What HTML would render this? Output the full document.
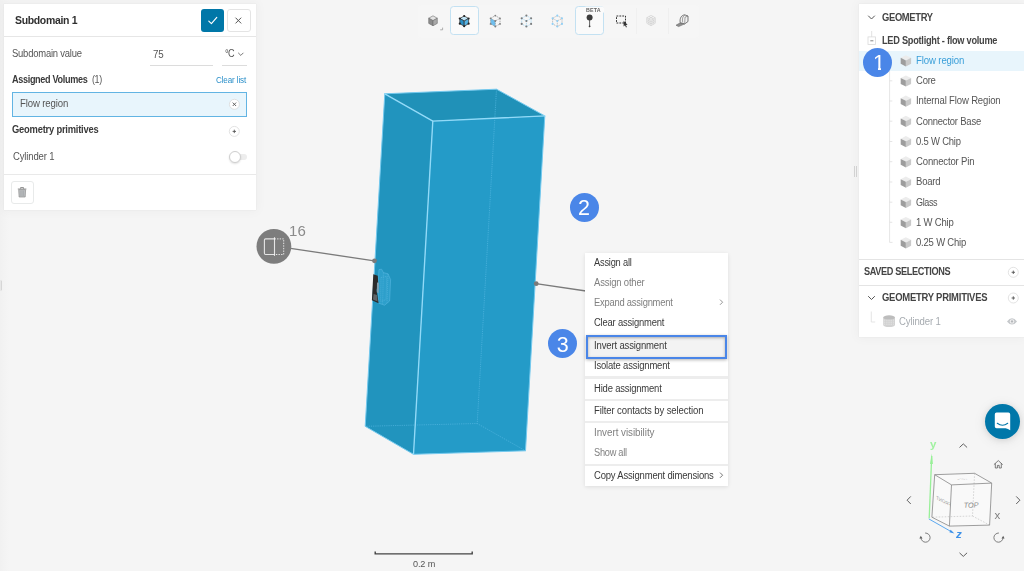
<!DOCTYPE html>
<html lang="en">
<head>
<meta charset="utf-8">
<title>Subdomain 1 - Invert assignment</title>
<style>
html,body{margin:0;padding:0;}
body{width:1024px;height:571px;overflow:hidden;background:#f5f5f5;position:relative;font-family:"Liberation Sans",sans-serif;}
.abs{position:absolute;}
.t{position:absolute;white-space:nowrap;line-height:1;}
.panel{position:absolute;background:#fff;box-shadow:0 0 10px 2px rgba(0,0,0,0.03), 0 0 1px rgba(0,0,0,0.10);}
.circ{position:absolute;border-radius:50%;}
.badge{position:absolute;width:29px;height:29px;border-radius:50%;background:#4a86e8;}
.sep{position:absolute;left:585px;width:143.2px;height:2.4px;background:#ededed;}
.ic{position:absolute;overflow:visible;}
</style>
</head>
<body>
<!-- viewport scene -->
<svg class="abs" style="left:0;top:0" width="1024" height="571" viewBox="0 0 1024 571">
  <!-- box -->
  <polygon points="384.8,93.8 496.5,89.2 544.8,115.9 432.8,121.1" fill="#2091b8"/>
  <polygon points="384.8,93.8 432.8,121.1 413.5,454.3 365.2,426.3" fill="#2194be"/>
  <polygon points="432.8,121.1 544.8,115.9 525.5,450.8 413.5,454.3" fill="#249bc8"/>
  <g fill="none" stroke="#55b8e2" stroke-width="0.8" stroke-dasharray="1.2 1" opacity="0.85">
    <polyline points="496.5,89.2 477.2,423.5 365.2,426.3"/>
    <line x1="477.2" y1="423.5" x2="525.5" y2="450.8"/>
  </g>
  <g fill="none" stroke="#74c9ee" stroke-width="1" stroke-linejoin="round" stroke-linecap="round">
    <polyline points="384.8,93.8 496.5,89.2 544.8,115.9 525.5,450.8 413.5,454.3 365.2,426.3 384.8,93.8"/>
  </g>
  <g fill="none" stroke="#92daf8" stroke-width="1.35" stroke-linejoin="round" stroke-linecap="round">
    <polyline points="384.8,93.8 432.8,121.1 544.8,115.9"/>
    <line x1="432.8" y1="121.1" x2="413.5" y2="454.3"/>
  </g>
  <!-- leader lines -->
  <line x1="290.5" y1="248.4" x2="374.3" y2="260.8" stroke="#7a7a7a" stroke-width="1.3"/>
  <circle cx="374.5" cy="260.8" r="2.4" fill="#7a7a7a"/>
  <line x1="536" y1="283.7" x2="586" y2="291" stroke="#7a7a7a" stroke-width="1.3"/>
  <circle cx="536.2" cy="283.7" r="2.4" fill="#7a7a7a"/>
  <!-- small lamp -->
  <g>
    <path d="M378.6 276 L379 269.6 L381.6 269.2 L383.4 272.6 L388 273.8 L390.6 279.6 L389.6 301 L384.6 305.2 L378.2 303 Z" fill="#2d9fcb" stroke="#56b6e0" stroke-width="0.7" stroke-opacity="0.85"/>
    <path d="M381 277.5 L386.8 276.4 L386 299.6 L380.6 301.6 Z M383.4 272.6 L382.6 303.8 M388 273.8 L387 302.6" fill="none" stroke="#63bde4" stroke-width="0.5" stroke-opacity="0.8" stroke-dasharray="1.2 0.8"/>
    <polygon points="373.3,274.2 377.8,275.8 378.2,283 376.6,290 378.6,303.2 371.9,300.2" fill="#2b2b2b"/>
    <polygon points="377,282.4 379,282.8 378.6,293 376.8,292.4" fill="#7f9fb0"/>
    <polygon points="373.6,294 377,295 377.6,301.6 373,299.6" fill="#5e6468"/>
  </g>
  <!-- node icon -->
  <circle cx="273.9" cy="246.4" r="17.4" fill="#7d7d7d"/>
  <g fill="none" stroke="#fff" stroke-opacity="0.8">
    <path d="M274.5 238.9 H265.6 Q264.4 238.9 264.4 240.1 V253.3 Q264.4 254.5 265.6 254.5 H274.5" stroke-width="1.1"/>
    <path d="M274.5 238.9 H283.7 V254.5 H274.5" stroke-width="1" stroke-dasharray="1.4 1.2"/>
    <line x1="274.5" y1="237.2" x2="274.5" y2="255.9" stroke-width="1.1"/>
  </g>
  <!-- scale bar -->
  <path d="M375.2 551.4 V553.9 H472.2 V551.4" fill="none" stroke="#444" stroke-width="1.4"/>
</svg>

<!-- left edge band -->
<div class="abs" style="left:0;top:0;width:9px;height:571px;background:linear-gradient(90deg,#f1f1f1,#f5f5f5)"></div>
<div class="abs" style="left:0;top:279.5px;width:2.2px;height:11px;background:#e7e7e7"></div>
<div class="abs" style="left:1px;top:280.5px;width:0.8px;height:9px;background:#d6d6d6"></div>

<!-- LEFT PANEL -->
<div class="panel" style="left:4px;top:4px;width:251.5px;height:206px;"></div>
<div class="abs" style="left:4px;top:36px;width:251.5px;height:1px;background:#e6e6e6"></div>
<div class="abs" style="left:201px;top:9px;width:23px;height:23px;border-radius:3px;background:#0077a8"></div>
<svg class="ic" style="left:201px;top:9px" width="23" height="23" viewBox="0 0 23 23"><path d="M7.8 12.2 L10.4 14.6 L15.8 8.4" fill="none" stroke="#fff" stroke-width="1.15" stroke-linecap="round" stroke-linejoin="round"/></svg>
<div class="abs" style="left:227px;top:8.8px;width:21.5px;height:21.5px;border-radius:3px;background:#fff;border:1px solid #e4e4e4"></div>
<svg class="ic" style="left:227px;top:8.8px" width="23" height="23" viewBox="0 0 23 23"><path d="M8.5 8.7 L14.2 14.4 M14.2 8.7 L8.5 14.4" fill="none" stroke="#555" stroke-width="1"/></svg>
<div class="abs" style="left:150px;top:65px;width:63px;height:1px;background:#dcdcdc"></div>
<div class="abs" style="left:222px;top:65px;width:24.5px;height:1px;background:#dcdcdc"></div>
<svg class="ic" style="left:237px;top:50px" width="8" height="8" viewBox="0 0 8 8"><path d="M1.2 2.8 L3.8 5.4 L6.4 2.8" fill="none" stroke="#666" stroke-width="0.9"/></svg>
<div class="abs" style="left:12px;top:92px;width:233px;height:23px;background:#e8f5fc;border:1px solid #62b4e3;border-left-width:1.5px;border-bottom-width:1.5px"></div>
<svg class="ic" style="left:228px;top:98px" width="13" height="13" viewBox="0 0 13 13"><circle cx="6.4" cy="6.3" r="5" fill="#fff" stroke="#d9d9d9" stroke-width="0.8"/><path d="M4.7 4.6 L8.1 8 M8.1 4.6 L4.7 8" stroke="#555" stroke-width="0.9" fill="none"/></svg>
<svg class="ic" style="left:227.5px;top:125px" width="13" height="13" viewBox="0 0 13 13"><circle cx="6.3" cy="6.4" r="5" fill="#fff" stroke="#dcdcdc" stroke-width="0.8"/><path d="M4.6 6.4 H8 M6.3 4.7 V8.1" stroke="#555" stroke-width="0.9" fill="none"/></svg>
<!-- toggle -->
<div class="abs" style="left:234px;top:153.5px;width:12.5px;height:6.5px;border-radius:3.5px;background:#ededed"></div>
<div class="abs" style="left:229.3px;top:151.4px;width:10px;height:10px;border-radius:50%;background:#fff;border:0.8px solid #cfcfcf;box-shadow:0 1px 2px rgba(0,0,0,0.12)"></div>
<div class="abs" style="left:4px;top:174px;width:251.5px;height:1px;background:#e9e9e9"></div>
<div class="abs" style="left:11.3px;top:181.2px;width:20.4px;height:20.4px;border-radius:3px;background:#fff;border:1px solid #e8eaea"></div>
<svg class="ic" style="left:11.3px;top:181.2px" width="22" height="22" viewBox="0 0 22 22"><path d="M6.8 8 H15.4 M9.6 7.8 V6.5 H12.5 V7.8" fill="none" stroke="#8a8a8a" stroke-width="0.9"/><path d="M7.7 8.6 H14.6 L14.2 16 H8.1 Z" fill="#bcbfc1" stroke="#8e8e8e" stroke-width="0.7"/><path d="M9.8 9.6 V15 M11.15 9.6 V15 M12.5 9.6 V15" stroke="#9a9da0" stroke-width="0.5"/></svg>

<!-- TOOLBAR -->
<div class="abs" style="left:418px;top:5px;width:281px;height:33px;border-radius:3px;background:#f6f6f6;box-shadow:0 0 1px rgba(0,0,0,0.02)"></div>
<div class="abs" style="left:450.3px;top:6.2px;width:27px;height:27px;border-radius:3.5px;background:#fafafa;border:0.8px solid #c3e1f2"></div>
<div class="abs" style="left:575.4px;top:6.2px;width:27px;height:27px;border-radius:3.5px;background:#fafafa;border:0.8px solid #c3e1f2"></div>
<div class="abs" style="left:636px;top:8px;width:1px;height:26px;background:#f0f0f0"></div>
<div class="abs" style="left:667.5px;top:8px;width:1px;height:26px;background:#efefef"></div>
<svg class="abs" style="left:410px;top:0" width="300" height="42" viewBox="410 0 300 42">
  <!-- icon1 gray cube -->
  <g transform="translate(433,20.8) scale(0.86)">
    <polygon points="0,-5.8 5,-3 0,-0.2 -5,-3" fill="#e4e4e4" stroke="#6f6f6f" stroke-width="0.7"/>
    <polygon points="-5,-3 0,-0.2 0,5.8 -5,3" fill="#8c8c8c" stroke="#6f6f6f" stroke-width="0.7"/>
    <polygon points="5,-3 0,-0.2 0,5.8 5,3" fill="#a9a9a9" stroke="#6f6f6f" stroke-width="0.7"/>
  </g>
  <path d="M442.6 27.6 V29.8 H440.2" fill="none" stroke="#9a9a9a" stroke-width="0.8"/>
  <!-- icon2 blue cube w/ vertices -->
  <g transform="translate(464.2,21) scale(0.9)">
    <polygon points="0,-5.6 4.9,-2.8 0,0 -4.9,-2.8" fill="#bfe4f6" stroke="#333" stroke-width="0.8"/>
    <polygon points="-4.9,-2.8 0,0 0,5.8 -4.9,3" fill="#2b8fc6" stroke="#333" stroke-width="0.8"/>
    <polygon points="4.9,-2.8 0,0 0,5.8 4.9,3" fill="#56b3e4" stroke="#333" stroke-width="0.8"/>
    <g fill="#222"><circle cx="0" cy="-5.6" r="1.2"/><circle cx="4.9" cy="-2.8" r="1.2"/><circle cx="-4.9" cy="-2.8" r="1.2"/><circle cx="0" cy="5.8" r="1.2"/><circle cx="-4.9" cy="3" r="1.2"/><circle cx="4.9" cy="3" r="1.2"/></g>
  </g>
  <!-- icon3 -->
  <g transform="translate(495.3,21) scale(0.96)">
    <polygon points="-4.9,-2.8 0,0 0,5.8 -4.9,3" fill="#6fbfee"/>
    <g fill="none" stroke="#8c8c8c" stroke-width="0.7" stroke-dasharray="1.4 0.7"><polygon points="0,-5.6 4.9,-2.8 4.9,3 0,5.8 -4.9,3 -4.9,-2.8"/><path d="M-4.9 -2.8 L0 0 L4.9 -2.8 M0 0 V5.8"/></g>
    <g fill="#808080"><circle cx="0" cy="-5.6" r="0.95"/><circle cx="4.9" cy="-2.8" r="0.95"/><circle cx="-4.9" cy="-2.8" r="0.95"/><circle cx="0" cy="5.8" r="0.95"/><circle cx="-4.9" cy="3" r="0.95"/><circle cx="4.9" cy="3" r="0.95"/><circle cx="0" cy="0" r="0.95"/></g>
  </g>
  <!-- icon4 -->
  <g transform="translate(526.4,21) scale(0.96)">
    <g fill="none" stroke="#8fcdf0" stroke-width="0.75" stroke-dasharray="1.3 0.9"><polygon points="0,-5.6 4.9,-2.8 4.9,3 0,5.8 -4.9,3 -4.9,-2.8"/><path d="M-4.9 -2.8 L0 0 L4.9 -2.8 M0 0 V5.8"/></g>
    <g fill="#7c7c7c"><circle cx="0" cy="-5.6" r="1.1"/><circle cx="4.9" cy="-2.8" r="1.1"/><circle cx="-4.9" cy="-2.8" r="1.1"/><circle cx="0" cy="5.8" r="1.1"/><circle cx="-4.9" cy="3" r="1.1"/><circle cx="4.9" cy="3" r="1.1"/><circle cx="0" cy="0" r="1.1"/></g>
  </g>
  <!-- icon5 -->
  <g transform="translate(557.3,21) scale(0.96)">
    <g fill="none" stroke="#9c9c9c" stroke-width="0.65" stroke-dasharray="1.4 0.8"><polygon points="0,-5.6 4.9,-2.8 4.9,3 0,5.8 -4.9,3 -4.9,-2.8"/><path d="M-4.9 -2.8 L0 0 L4.9 -2.8 M0 0 V5.8"/></g>
    <g fill="#8fd0f8"><circle cx="0" cy="-5.6" r="1.05"/><circle cx="4.9" cy="-2.8" r="1.05"/><circle cx="-4.9" cy="-2.8" r="1.05"/><circle cx="0" cy="5.8" r="1.05"/><circle cx="-4.9" cy="3" r="1.05"/><circle cx="4.9" cy="3" r="1.05"/><circle cx="0" cy="0" r="1.05"/></g>
  </g>
  <!-- pin icon -->
  <circle cx="589.6" cy="17.4" r="3" fill="#3c3c3c"/>
  <line x1="589.6" y1="20" x2="589.6" y2="26.4" stroke="#3c3c3c" stroke-width="0.8"/>
  <path d="M588.5 26.3 L589.6 25.2 L590.7 26.3 L589.6 27.5 Z" fill="#3c3c3c"/>
  <rect x="583.4" y="6.6" width="20.8" height="6.8" rx="3" fill="#fbfbfb"/>
  <!-- select rect -->
  <rect x="616.5" y="16" width="9" height="7" fill="none" stroke="#333" stroke-width="1" stroke-dasharray="1.8 1.1"/>
  <path d="M623.6 20.8 L623.6 26.6 L625 25.3 L626 27.4 L626.9 27 L625.9 24.9 L627.6 24.8 Z" fill="#333"/>
  <!-- faded mesh cube -->
  <g transform="translate(651,20.5) scale(0.92)" fill="none" stroke="#c6c6c6" stroke-width="0.6">
    <polygon points="0,-5.6 4.6,-3 4.6,3 0,5.6 -4.6,3 -4.6,-3"/>
    <path d="M-4.6 -3 L0 -0.4 L4.6 -3 M0 -0.4 V5.6 M-2.3 -1.7 V4.3 M2.3 -1.7 V4.3 M-4.6 -1 L0 1.6 L4.6 -1 M-4.6 1 L0 3.6 L4.6 1 M-2.3 -4.3 L2.3 -1.7 M2.3 -4.3 L-2.3 -1.7"/>
  </g>
  <!-- tape measure -->
  <g stroke-linejoin="round">
    <path d="M680.3 22.8 L676 25.2 L678.6 26.6 L684.8 23.8 Z" fill="#8f8f8f" stroke="#6a6a6a" stroke-width="0.6"/>
    <path d="M680.2 22.7 C679.5 18.2 681.4 14.9 684.9 14.9 L688 16 L688 21.5 L684.7 23.9 Z" fill="#f1f1f1" stroke="#5c5c5c" stroke-width="0.8"/>
    <path d="M684.9 14.9 C682.6 15.9 682 19.3 682.7 22.3 M688 16 L685 17.2 L684.7 23.9" fill="none" stroke="#6c6c6c" stroke-width="0.6"/>
  </g>
</svg>

<!-- RIGHT PANEL -->
<div class="abs" style="left:853.6px;top:165.5px;width:1px;height:11px;background:#d4d4d4"></div>
<div class="abs" style="left:855.7px;top:165.5px;width:1px;height:11px;background:#d4d4d4"></div>
<div class="panel" style="left:859px;top:4px;width:165px;height:332.7px;"></div>
<div class="abs" style="left:859px;top:51px;width:165px;height:20px;background:#e8f5fc"></div>
<div class="abs" style="left:859px;top:259px;width:165px;height:1px;background:#e4e4e4"></div>
<div class="abs" style="left:859px;top:285px;width:165px;height:1px;background:#e4e4e4"></div>
<svg class="abs" style="left:859px;top:4px" width="165" height="333" viewBox="859 4 165 333">
  <path d="M868.2 15.7 L871.5 19 L874.8 15.7" fill="none" stroke="#555" stroke-width="1"/>
  <path d="M868.2 296.2 L871.5 299.5 L874.8 296.2" fill="none" stroke="#555" stroke-width="1"/>
  <line x1="871.7" y1="31" x2="871.7" y2="37" stroke="#d9d9d9" stroke-width="0.8"/>
  <rect x="868" y="36.9" width="7.6" height="7.6" fill="#fff" stroke="#dadada" stroke-width="0.8"/>
  <line x1="870.3" y1="40.8" x2="873.4" y2="40.8" stroke="#777" stroke-width="0.9"/>
  <g stroke="#dedede" stroke-width="0.8" fill="none">
    <path d="M889.6 71 V242.4 H892.5"/>
    <path d="M889.6 80.8 H892.3 M889.6 101 H892.3 M889.6 121.2 H892.3 M889.6 141.5 H892.3 M889.6 161.7 H892.3 M889.6 182 H892.3 M889.6 202.2 H892.3 M889.6 222.3 H892.3"/>
    <path d="M871.3 311.5 V322 H875.2"/>
  </g>
  <defs>
    <g id="cube">
      <polygon points="0,-5.6 5.2,-3 0,-0.4 -5.2,-3" fill="#ececec"/>
      <polygon points="-5.2,-3 0,-0.4 0,5.6 -5.2,2.9" fill="#9d9d9d"/>
      <polygon points="5.2,-3 0,-0.4 0,5.6 5.2,2.9" fill="#c9c9c9"/>
    </g>
  </defs>
  <use href="#cube" x="905.9" y="60.8"/>
  <use href="#cube" x="905.9" y="81"/>
  <use href="#cube" x="905.9" y="101.2"/>
  <use href="#cube" x="905.9" y="121.4"/>
  <use href="#cube" x="905.9" y="141.7"/>
  <use href="#cube" x="905.9" y="161.9"/>
  <use href="#cube" x="905.9" y="182.2"/>
  <use href="#cube" x="905.9" y="202.4"/>
  <use href="#cube" x="905.9" y="222.6"/>
  <use href="#cube" x="905.9" y="242.8"/>
  <!-- plus circles -->
  <g fill="#fff" stroke="#dcdcdc" stroke-width="0.8"><circle cx="1013.3" cy="272.3" r="5"/><circle cx="1013.3" cy="298" r="5"/></g>
  <path d="M1011.6 272.3 H1015 M1013.3 270.6 V274 M1011.6 298 H1015 M1013.3 296.3 V299.7" stroke="#555" stroke-width="0.9" fill="none"/>
  <!-- cylinder icon -->
  <g>
    <path d="M883.2 317.4 V325 A5.9 2.1 0 0 0 895 325 V317.4 Z" fill="#d2d2d2"/>
    <ellipse cx="889.1" cy="317.4" rx="5.9" ry="2.1" fill="#bdbdbd"/>
    <path d="M884 320.2 H894.4 M884 322.2 H894.4 M884 324.2 H894.4" stroke="#f4f4f4" stroke-width="0.6" stroke-dasharray="0.9 0.9"/>
  </g>
  <!-- eye -->
  <path d="M1007 321.4 Q1012 315 1017 321.4 Q1012 327.8 1007 321.4 Z" fill="#c4c7ca"/>
  <circle cx="1012" cy="321.4" r="2.2" fill="#f4f4f4"/><circle cx="1012" cy="321.4" r="1.2" fill="#b4b7ba"/>
</svg>
<div class="badge" style="left:863.3px;top:47.7px"></div>

<!-- badges 2,3 -->
<div class="badge" style="left:569.9px;top:192.5px"></div>
<div class="badge" style="left:548.1px;top:329.2px"></div>

<!-- CONTEXT MENU -->
<div class="abs" style="left:585px;top:252.6px;width:143.2px;height:233.6px;background:#fff;box-shadow:0 1px 4px rgba(0,0,0,0.10)"></div>
<div class="sep" style="top:376.2px"></div>
<div class="sep" style="top:398.8px"></div>
<div class="sep" style="top:420.8px"></div>
<div class="sep" style="top:464.1px"></div>
<div class="abs" style="left:586px;top:335.2px;width:137px;height:19.8px;background:#f3f3f3;border:2px solid #4a86e8;box-shadow:inset 0 1px 3px rgba(0,0,0,0.3), 0 1px 3px rgba(0,0,0,0.3)"></div>
<svg class="ic" style="left:717px;top:298px" width="8" height="8" viewBox="0 0 8 8"><path d="M3 1.6 L5.6 4.2 L3 6.8" fill="none" stroke="#888" stroke-width="0.9"/></svg>
<svg class="ic" style="left:717px;top:470.8px" width="8" height="8" viewBox="0 0 8 8"><path d="M3 1.6 L5.6 4.2 L3 6.8" fill="none" stroke="#666" stroke-width="0.9"/></svg>

<!-- CHAT BUTTON -->
<div class="circ" style="left:985px;top:403.8px;width:35px;height:35px;background:#0077a9;box-shadow:0 1px 6px rgba(0,0,0,0.10), 0 2px 14px rgba(0,0,0,0.08)"></div>
<svg class="ic" style="left:985px;top:403.8px" width="35" height="35" viewBox="0 0 35 35"><path d="M11.6 8.6 H23.4 Q25.2 8.6 25.2 10.4 V26.3 Q23 24.6 20.6 24.3 H11.6 Q9.8 24.3 9.8 22.5 V10.4 Q9.8 8.6 11.6 8.6 Z" fill="#fff"/><path d="M12.3 19.3 Q17.5 23.3 22.7 19.3" fill="none" stroke="#0077a9" stroke-width="1.1" stroke-linecap="round"/></svg>

<!-- NAV CUBE -->
<svg class="abs" style="left:895px;top:435px" width="129" height="136" viewBox="895 435 129 136">
  <polygon points="934.7,474.7 974.6,473.3 991.7,483.1 989.6,525.1 949.4,526.1 931.9,517.2" fill="#fafafa" fill-opacity="0.9"/>
  <g fill="none" stroke="#bcbcbc" stroke-width="0.6" stroke-dasharray="1.6 1.4">
    <path d="M974.6 473.3 L972.5 516 L931.9 517.2 M972.5 516 L989.6 525.1"/>
  </g>
  <g fill="none" stroke="#868686" stroke-width="0.8" stroke-linejoin="round">
    <polygon points="934.7,474.7 974.6,473.3 991.7,483.1 951.5,484.9"/>
    <polyline points="934.7,474.7 931.9,517.2 949.4,526.1 989.6,525.1 991.7,483.1"/>
    <line x1="951.5" y1="484.9" x2="949.4" y2="526.1"/>
  </g>
  <line x1="929.2" y1="518.2" x2="931.7" y2="456" stroke="#98f098" stroke-width="1.3"/>
  <path d="M930 464 L931.8 453.6 L932.9 464 Z" fill="#98f098"/>
  <line x1="928.8" y1="518.9" x2="952.4" y2="532.3" stroke="#4a9fee" stroke-width="0.9"/>
  <path d="M950.6 529.8 L954.4 533.4 L949.4 532.2 Z" fill="#3c90e8"/>
  <g fill="none" stroke="#5f5f5f" stroke-width="1" stroke-linecap="round" stroke-linejoin="round">
    <path d="M959.8 447.2 L963.3 443.9 L966.8 447.2"/>
    <path d="M959.8 553.1 L963.3 556.4 L966.8 553.1"/>
    <path d="M910.5 496.7 L907.1 500.2 L910.5 503.7"/>
    <path d="M1016.5 496.7 L1019.9 500.2 L1016.5 503.7"/>
    <path d="M994.2 464.4 L998.3 460.6 L1002.4 464.4 M995.3 463.7 V468 H997.4 V465.4 H999.2 V468 H1001.3 V463.7" stroke-width="0.8"/>
    <path d="M925.5 533 A4.6 4.6 0 1 1 920.9 537.8" stroke-width="0.8"/>
    <path d="M998.5 533 A4.6 4.6 0 1 0 1003.1 537.8" stroke-width="0.8"/>
  </g>
  <path d="M919.4 538.6 L922.5 538.4 L920.8 535.8 Z" fill="#5f5f5f"/>
  <path d="M1004.6 538.6 L1001.5 538.4 L1003.2 535.8 Z" fill="#5f5f5f"/>
  <text font-family="Liberation Sans, sans-serif" font-size="7.3" fill="#8a8a8a" text-anchor="middle" transform="matrix(1,-0.03,-0.12,1,970.9,507.6)">TOP</text>
  <text font-family="Liberation Sans, sans-serif" font-size="5" fill="#999" text-anchor="middle" transform="matrix(-0.85,-0.45,-0.05,1,943.5,503)">FRONT</text>
  <text font-family="Liberation Sans, sans-serif" font-size="3.6" fill="#9a9a9a" text-anchor="middle" transform="matrix(-1,0.04,0.55,0.3,963,479.6)">LEFT</text>
</svg>

<div id="txt" style="position:absolute;left:0;top:0;width:1024px;height:571px;will-change:transform">
<span class="t" id="t1" style="left:15.20px;top:15.40px;font-size:11.3px;color:#2f2f2f;font-weight:bold;letter-spacing:-0.350px;transform:scaleX(0.9268);transform-origin:0 0;">Subdomain 1</span>
<span class="t" id="t2" style="left:12.30px;top:49.10px;font-size:10px;color:#555;letter-spacing:-0.214px;transform:scaleX(0.9424);transform-origin:0 0;">Subdomain value</span>
<span class="t" id="t3" style="left:152.60px;top:49.80px;font-size:10px;color:#555;letter-spacing:-0.172px;transform:scaleX(0.9769);transform-origin:0 0;">75</span>
<span class="t" id="t4" style="left:225.20px;top:49.20px;font-size:10px;color:#555;letter-spacing:-0.685px;transform:scaleX(0.9100);transform-origin:0 0;">°C</span>
<span class="t" id="t5" style="left:12.30px;top:75.10px;font-size:10px;color:#3a3a3a;font-weight:bold;letter-spacing:-0.364px;transform:scaleX(0.9091);transform-origin:0 0;">Assigned Volumes</span>
<span class="t" id="t5b" style="left:92.00px;top:75.10px;font-size:10px;color:#555;letter-spacing:-0.429px;transform:scaleX(0.8966);transform-origin:0 0;">(1)</span>
<span class="t" id="t6" style="left:216.00px;top:75.90px;font-size:8.6px;color:#2a8fc9;letter-spacing:-0.148px;transform:scaleX(0.9407);transform-origin:0 0;">Clear list</span>
<span class="t" id="t7" style="left:19.70px;top:98.90px;font-size:10px;color:#555;letter-spacing:-0.139px;transform:scaleX(0.9600);transform-origin:0 0;">Flow region</span>
<span class="t" id="t8" style="left:12.30px;top:125.30px;font-size:10px;color:#3a3a3a;font-weight:bold;letter-spacing:-0.230px;transform:scaleX(0.9365);transform-origin:0 0;">Geometry primitives</span>
<span class="t" id="t9" style="left:12.50px;top:152.00px;font-size:10px;color:#555;letter-spacing:-0.161px;transform:scaleX(0.9522);transform-origin:0 0;">Cylinder 1</span>
<span class="t" id="r1" style="left:881.80px;top:12.60px;font-size:10px;color:#444;font-weight:bold;letter-spacing:-0.346px;transform:scaleX(0.9368);transform-origin:0 0;">GEOMETRY</span>
<span class="t" id="r2" style="left:881.80px;top:35.80px;font-size:10px;color:#444;font-weight:bold;letter-spacing:-0.277px;transform:scaleX(0.9197);transform-origin:0 0;">LED Spotlight - flow volume</span>
<span class="t" id="r3" style="left:916.40px;top:55.60px;font-size:10px;color:#3a9fd9;letter-spacing:-0.135px;transform:scaleX(0.9612);transform-origin:0 0;">Flow region</span>
<span class="t" id="r4" style="left:916.40px;top:76.00px;font-size:10px;color:#555;letter-spacing:-0.245px;transform:scaleX(0.9497);transform-origin:0 0;">Core</span>
<span class="t" id="r5" style="left:916.40px;top:96.00px;font-size:10px;color:#555;letter-spacing:-0.154px;transform:scaleX(0.9527);transform-origin:0 0;">Internal Flow Region</span>
<span class="t" id="r6" style="left:916.40px;top:116.50px;font-size:10px;color:#555;letter-spacing:-0.206px;transform:scaleX(0.9444);transform-origin:0 0;">Connector Base</span>
<span class="t" id="r7" style="left:916.40px;top:136.80px;font-size:10px;color:#555;letter-spacing:-0.204px;transform:scaleX(0.9448);transform-origin:0 0;">0.5 W Chip</span>
<span class="t" id="r8" style="left:916.40px;top:157.00px;font-size:10px;color:#555;letter-spacing:-0.163px;transform:scaleX(0.9541);transform-origin:0 0;">Connector Pin</span>
<span class="t" id="r9" style="left:916.40px;top:177.30px;font-size:10px;color:#555;letter-spacing:-0.214px;transform:scaleX(0.9523);transform-origin:0 0;">Board</span>
<span class="t" id="r10" style="left:916.40px;top:197.70px;font-size:10px;color:#555;letter-spacing:-0.416px;transform:scaleX(0.9039);transform-origin:0 0;">Glass</span>
<span class="t" id="r11" style="left:916.40px;top:217.80px;font-size:10px;color:#555;letter-spacing:-0.195px;transform:scaleX(0.9507);transform-origin:0 0;">1 W Chip</span>
<span class="t" id="r12" style="left:916.40px;top:237.80px;font-size:10px;color:#555;letter-spacing:-0.194px;transform:scaleX(0.9475);transform-origin:0 0;">0.25 W Chip</span>
<span class="t" id="r13" style="left:864.20px;top:266.80px;font-size:10px;color:#444;font-weight:bold;letter-spacing:-0.381px;transform:scaleX(0.9158);transform-origin:0 0;">SAVED SELECTIONS</span>
<span class="t" id="r14" style="left:881.80px;top:292.80px;font-size:10px;color:#444;font-weight:bold;letter-spacing:-0.243px;transform:scaleX(0.9440);transform-origin:0 0;">GEOMETRY PRIMITIVES</span>
<span class="t" id="r15" style="left:898.80px;top:316.70px;font-size:10px;color:#a6abb0;letter-spacing:-0.142px;transform:scaleX(0.9577);transform-origin:0 0;">Cylinder 1</span>
<span class="t" id="m1" style="left:593.90px;top:257.50px;font-size:10px;color:#3a3a3a;letter-spacing:-0.231px;transform:scaleX(0.9280);transform-origin:0 0;">Assign all</span>
<span class="t" id="m2" style="left:593.90px;top:278.00px;font-size:10px;color:#808080;letter-spacing:-0.183px;transform:scaleX(0.9462);transform-origin:0 0;">Assign other</span>
<span class="t" id="m3" style="left:593.90px;top:298.00px;font-size:10px;color:#808080;letter-spacing:-0.233px;transform:scaleX(0.9369);transform-origin:0 0;">Expand assignment</span>
<span class="t" id="m4" style="left:593.90px;top:318.20px;font-size:10px;color:#3a3a3a;letter-spacing:-0.204px;transform:scaleX(0.9417);transform-origin:0 0;">Clear assignment</span>
<span class="t" id="m5" style="left:593.90px;top:340.60px;font-size:10px;color:#3a3a3a;letter-spacing:-0.157px;transform:scaleX(0.9526);transform-origin:0 0;">Invert assignment</span>
<span class="t" id="m6" style="left:593.90px;top:361.10px;font-size:10px;color:#3a3a3a;letter-spacing:-0.181px;transform:scaleX(0.9451);transform-origin:0 0;">Isolate assignment</span>
<span class="t" id="m7" style="left:593.90px;top:383.70px;font-size:10px;color:#3a3a3a;letter-spacing:-0.196px;transform:scaleX(0.9451);transform-origin:0 0;">Hide assignment</span>
<span class="t" id="m8" style="left:593.90px;top:405.60px;font-size:10px;color:#3a3a3a;letter-spacing:-0.126px;transform:scaleX(0.9570);transform-origin:0 0;">Filter contacts by selection</span>
<span class="t" id="m9" style="left:593.90px;top:428.20px;font-size:10px;color:#808080;letter-spacing:-0.044px;transform:scaleX(0.9830);transform-origin:0 0;">Invert visibility</span>
<span class="t" id="m10" style="left:593.90px;top:448.40px;font-size:10px;color:#808080;letter-spacing:-0.280px;transform:scaleX(0.9232);transform-origin:0 0;">Show all</span>
<span class="t" id="m11" style="left:593.90px;top:470.60px;font-size:10px;color:#3a3a3a;letter-spacing:-0.187px;transform:scaleX(0.9470);transform-origin:0 0;">Copy Assignment dimensions</span>
<span class="t" id="o1" style="left:289.10px;top:223.00px;font-size:15px;color:#8a8a8a;">16</span>
<span class="t" id="o2" style="left:412.60px;top:559.10px;font-size:9.4px;color:#555;letter-spacing:-0.117px;transform:scaleX(0.9702);transform-origin:0 0;">0.2 m</span>
<span class="t" id="o3" style="left:586.10px;top:8.20px;font-size:5.3px;color:#666;font-weight:bold;letter-spacing:0.156px;">BETA</span>
<span class="t" id="b1" style="left:873.00px;top:53.40px;font-size:21.5px;color:#fff;">1</span>
<span class="t" id="b2" style="left:578.10px;top:198.00px;font-size:21.5px;color:#fff;">2</span>
<span class="t" id="b3" style="left:556.70px;top:335.00px;font-size:21.5px;color:#fff;">3</span>
<span class="t" id="n1" style="left:930.00px;top:439.20px;font-size:11.5px;color:#a0f2a0;font-weight:bold;">y</span>
<span class="t" id="n2" style="left:956.00px;top:529.30px;font-size:11.5px;color:#3c90e8;font-weight:bold;font-style:italic;">z</span>
<span class="t" id="n3" style="left:994.60px;top:510.20px;font-size:11.5px;color:#808080;">x</span>
</div>
<div class="abs" style="left:873.5px;top:67.9px;width:4.75px;height:2.5px;background:#4a86e8"></div>
<div class="abs" style="left:880.55px;top:67.9px;width:4.2px;height:2.5px;background:#4a86e8"></div>
</body>
</html>
